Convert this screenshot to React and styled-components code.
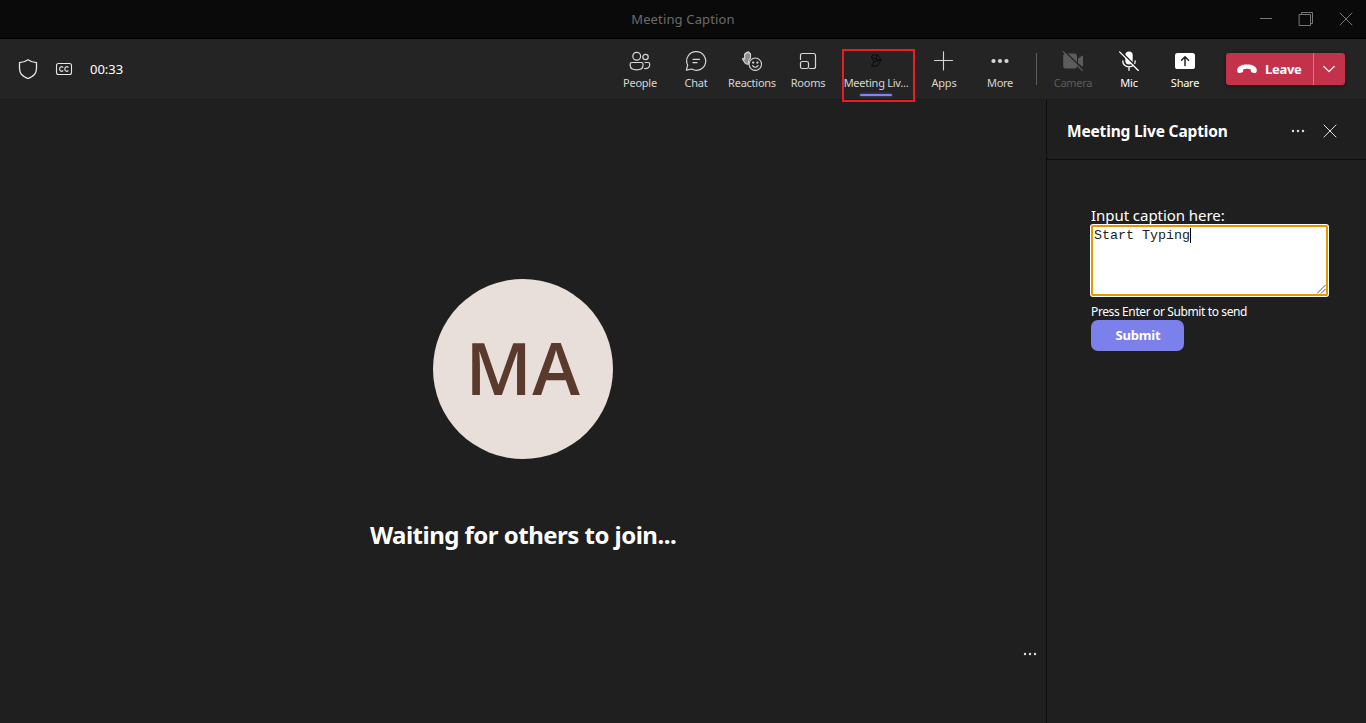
import React from 'react';
import styled, { createGlobalStyle } from 'styled-components';

const GlobalStyle = createGlobalStyle`
  * { box-sizing: border-box; }
  body {
    margin: 0;
    background: #1f1f1f;
    color: #fff;
    font-family: "Noto Sans", "Open Sans", sans-serif;
    overflow: hidden;
  }
  svg { display: block; flex: none; }
`;

const Window = styled.div`
  display: flex;
  flex-direction: column;
  width: 1366px;
  height: 723px;
`;

const TitleBar = styled.header`
  display: grid;
  grid-template-columns: 1fr auto 1fr;
  align-items: center;
  height: 39px;
  background: #0a0a0a;
  border-bottom: 1px solid #000;
`;

const WindowTitle = styled.span`
  grid-column: 2;
  color: #6b6b6b;
  font-size: 13px;
  line-height: 18px;
  letter-spacing: 0.15px;
`;

const WindowControls = styled.div`
  display: flex;
  justify-content: flex-end;
  gap: 24px;
  padding-right: 12px;
  color: #777;
`;

const Toolbar = styled.div`
  display: flex;
  align-items: center;
  height: 60px;
  padding: 0 21px 0 18px;
  background: #242424;
`;

const Status = styled.div`
  display: flex;
  align-items: center;
  flex: 1;
  gap: 16px;
  color: #e6e6e6;
`;

const Timer = styled.span`
  font-size: 13px;
  line-height: 18px;
  letter-spacing: 0;
  color: #fff;
`;

const Actions = styled.nav`
  display: flex;
  align-items: center;
`;

const Action = styled.div`
  position: relative;
  display: flex;
  flex-direction: column;
  align-items: center;
  width: ${(p) => p.$width || 56}px;
  height: 60px;
  padding-top: 12px;
  color: ${(p) => p.$color || '#d6d6d6'};
`;

const ActionLabel = styled.span`
  margin-top: 4px;
  font-size: 11px;
  line-height: 16px;
  letter-spacing: -0.25px;
  white-space: nowrap;
`;

const ActiveBar = styled.span`
  width: 32px;
  height: 2px;
  margin-top: 3px;
  border-radius: 1px;
  background: #7f85f5;
  box-shadow: 0 0 3px rgba(127, 133, 245, 0.55);
`;

const Highlight = styled.span`
  position: absolute;
  top: 10px;
  left: 6px;
  width: 73px;
  height: 53px;
  border: 2px solid #ec1c24;
  z-index: 1;
`;

const Divider = styled.span`
  width: 1px;
  height: 32px;
  margin: 0 8px;
  background: #5c5c5c;
`;

const LeaveGroup = styled.div`
  display: flex;
  width: 119px;
  height: 32px;
  margin-left: 13px;
  border-radius: 3px;
  background: #c4314b;
  box-shadow: 0 1px 4px rgba(0, 0, 0, 0.45);
`;

const LeaveMain = styled.div`
  display: flex;
  align-items: center;
  width: 88px;
  padding-left: 11px;
  gap: 8px;
  border-right: 1px solid #f1677f;
  font-size: 13px;
  font-weight: 700;
  letter-spacing: -0.3px;
`;

const LeaveMenu = styled.div`
  display: flex;
  flex: 1;
  align-items: center;
  justify-content: center;
  padding-right: 1px;
`;

const Content = styled.main`
  display: flex;
  flex: 1;
  border-top: 1px solid #1b1b1b;
`;

const Stage = styled.section`
  display: flex;
  flex-direction: column;
  align-items: center;
  width: 1046px;
  padding-top: 179px;
`;

const Avatar = styled.div`
  display: flex;
  align-items: center;
  justify-content: center;
  width: 180px;
  height: 180px;
  padding: 0 0 4px 0;
  border-radius: 50%;
  background: #e8deda;
  color: #593a2d;
  font-family: "Open Sans", sans-serif;
  font-size: 72px;
  font-weight: 650;
  line-height: 96px;
  letter-spacing: 0.5px;
`;

const Waiting = styled.h1`
  margin: 60px 0 0;
  font-size: 24px;
  line-height: 32px;
  font-weight: 700;
  letter-spacing: -0.52px;
`;

const StageFooter = styled.div`
  display: flex;
  align-self: stretch;
  justify-content: flex-end;
  padding: 95px 8px 0 0;
  color: #e0e0e0;
`;

const Panel = styled.aside`
  flex: 1;
  border-left: 1px solid #0d0d0d;
`;

const PanelHeader = styled.div`
  display: flex;
  align-items: center;
  height: 60px;
  padding: 3px 29px 0 20px;
  border-bottom: 1px solid #0d0d0d;
`;

const PanelTitle = styled.h2`
  flex: 1;
  margin: 0;
  font-size: 15.5px;
  line-height: 20px;
  font-weight: 700;
  letter-spacing: -0.17px;
`;

const PanelTools = styled.div`
  display: flex;
  align-items: center;
  gap: 17px;
  color: #e0e0e0;
`;

const CaptionForm = styled.div`
  display: flex;
  flex-direction: column;
  align-items: flex-start;
  padding: 45px 38px 0 44px;
`;

const FieldLabel = styled.label`
  font-size: 15px;
  line-height: 20px;
  letter-spacing: -0.05px;
`;

const CaptionInput = styled.div`
  position: relative;
  width: 237px;
  height: 71px;
  padding: 1px 1px;
  border: 2px solid #e59700;
  border-radius: 2px;
  box-shadow: 0 0 0 1px #fff;
  background: #fff;
  color: #222;
  font-family: "Liberation Mono", monospace;
  font-size: 13.333px;
  line-height: 15px;
`;

const Caret = styled.span`
  display: inline-block;
  width: 1px;
  height: 15px;
  background: #000;
  vertical-align: top;
`;

const Grip = styled.svg`
  position: absolute;
  right: 0;
  bottom: 0;
`;

const Hint = styled.span`
  margin-top: 8px;
  font-size: 12px;
  line-height: 16px;
  letter-spacing: -0.38px;
`;

const Submit = styled.button`
  width: 93px;
  height: 31px;
  margin: 0;
  padding: 0 0 1px 1px;
  border: 0;
  border-radius: 7px;
  background: #7b80eb;
  color: #fff;
  font: 700 13px "Noto Sans", "Open Sans", sans-serif;
  letter-spacing: -0.2px;
`;

const Icon = ({ size = 20, h, sw = 1.2, children, ...rest }) => (
  <svg width={size} height={h || size} viewBox={`0 0 ${size} ${h || size}`} fill="none"
    stroke="currentColor" strokeWidth={sw} strokeLinecap="round" strokeLinejoin="round" {...rest}>
    {children}
  </svg>
);

const Dots = ({ size = 16, r = 1.2, step = 5 }) => (
  <Icon size={size}>
    <g fill="currentColor" stroke="none">
      {[-step, 0, step].map((d) => <circle key={d} cx={size / 2 + d} cy={size / 2} r={r} />)}
    </g>
  </Icon>
);

const ShieldIcon = () => (
  <Icon sw={1.3}><path d="M10 .8C12.6 2.7 15.4 3.5 18.5 3.6V9.6C18.5 14.5 15.4 17.8 10 19.6C4.6 17.8 1.5 14.5 1.5 9.6V3.6C4.6 3.5 7.4 2.7 10 .8Z" /></Icon>
);

const CcIcon = () => (
  <Icon sw={1.1}>
    <rect x="2.5" y="4.5" width="15" height="11" rx="2" />
    <path d="M8.9 8.2C7.4 7 5.6 8 5.6 10S7.4 13 8.9 11.8M14.1 8.2C12.6 7 10.8 8 10.8 10S12.6 13 14.1 11.8" />
  </Icon>
);

const PeopleIcon = () => (
  <Icon size={22} h={20}>
    <circle cx="7.7" cy="5.2" r="3.9" /><circle cx="16.5" cy="6" r="2.7" />
    <path d="M2.8 11.5H12.5Q14 11.5 14 13V14.2C14 17 11.5 18.8 7.7 18.8S1.2 17 1.2 14.2V13Q1.2 11.5 2.8 11.5Z" />
    <path d="M16 11.5H19.2Q20.7 11.5 20.7 13V13.8C20.7 16.4 18.8 17.8 15.5 17.5" />
  </Icon>
);

const ChatIcon = () => (
  <Icon size={22} h={20}>
    <path d="M11.3 .7A9.3 9.3 0 1 1 6.7 18L1.3 19.2L2.7 14.2A9.3 9.3 0 0 1 11.3 .7Z" />
    <path d="M8 8.3H14.5M8 11.7H12" />
  </Icon>
);

const ReactionsIcon = () => (
  <Icon size={22} h={20} sw={1.1}>
    <path d="M4.2 12.2L1.7 8.4Q1.3 7.4 2.2 7.2L3.6 8.1V3.2Q4.1 2.2 5 3V1.8Q5.7 .7 6.5 1.7V1.2Q7.3 .2 8.1 1.3V2.5Q9.2 1.7 9.5 3V7.1C7.7 8.6 7.1 10.8 7.5 13.2Q5.5 13.5 4.2 12.2Z" fill="#8c8c8c" />
    <circle cx="14.3" cy="13.2" r="6.2" />
    <circle cx="12.2" cy="11.6" r=".6" fill="currentColor" /><circle cx="16.4" cy="11.6" r=".6" fill="currentColor" />
    <path d="M11.5 14.6Q14.3 17.9 17.1 14.6" />
  </Icon>
);

const RoomsIcon = () => (
  <Icon>
    <path d="M2.5 8.5V4.5Q2.5 2.5 4.5 2.5H15.5Q17.5 2.5 17.5 4.5V15.5Q17.5 17.5 15.5 17.5H11.5" />
    <rect x="2.5" y="10.5" width="8" height="7" rx="1.8" />
  </Icon>
);

const CaptionAppIcon = () => (
  <Icon sw={1} stroke="#0c0c0c">
    <path d="M5.5 5.8L7 3.8H11.5L15.2 9.2L11.5 14.8L5.5 15L7.8 10.8ZM5.5 5.8L9.8 8.2L11.5 3.8M9.8 8.2L15.2 9.2L7.8 10.8" />
  </Icon>
);

const PlusIcon = () => (
  <Icon sw={1.1}><path d="M9.5 .8V19M.5 9.5H18.5" /></Icon>
);

const CameraOffIcon = () => (
  <Icon size={22} h={20}>
    <g fill="currentColor" stroke="none">
      <rect x="1.2" y="2.5" width="13.8" height="15" rx="2.8" />
      <path d="M16 7.8L20 4.7Q21 4.3 21 5.3V14.7Q21 15.7 20 15.3L16 12.2Z" />
    </g>
    <path d="M2.5 .2L22 19.2" stroke="#242424" strokeWidth="1.5" />
    <path d="M1.3 .8L20.7 19.8" />
  </Icon>
);

const MicOffIcon = () => (
  <Icon sw={1.3}>
    <rect x="6.3" y=".5" width="7.4" height="13" rx="3.7" fill="currentColor" stroke="none" />
    <path d="M3.8 10C3.8 13.7 6.5 15.8 10 15.8S16.2 13.7 16.2 10M10 15.8V19.3" />
    <path d="M1.6 .1L20 18.2" stroke="#242424" strokeWidth="1.5" />
    <path d="M.6 .9L19.3 19.5" />
  </Icon>
);

const ShareIcon = () => (
  <Icon>
    <rect x="0" y="2" width="20" height="16" rx="2.6" fill="currentColor" stroke="none" />
    <path d="M10 14.5V6M6.5 9.2L10 5.7L13.5 9.2" stroke="#242424" strokeWidth="1.5" />
  </Icon>
);

const PhoneIcon = () => (
  <Icon size={20} h={12}>
    <path d="M10 1.6C15.3 1.6 19.8 3.5 19.8 7.3C19.8 9.6 18.8 10.2 17.4 9.9L15.1 9.4Q13.9 9.1 13.8 7.9L13.7 6.3Q10 5.1 6.3 6.3L6.2 7.9Q6.1 9.1 4.9 9.4L2.6 9.9C1.2 10.2 .2 9.6 .2 7.3C.2 3.5 4.7 1.6 10 1.6Z" fill="currentColor" stroke="none" />
  </Icon>
);

const ACTIONS = [
  { label: 'People', icon: <PeopleIcon /> },
  { label: 'Chat', icon: <ChatIcon /> },
  { label: 'Reactions', icon: <ReactionsIcon /> },
  { label: 'Rooms', icon: <RoomsIcon /> },
  { label: 'Meeting Liv...', icon: <CaptionAppIcon />, width: 80, active: true },
  { label: 'Apps', icon: <PlusIcon /> },
  { label: 'More', icon: <Dots size={20} r={2.1} step={6.5} /> },
];

const DEVICES = [
  { label: 'Camera', icon: <CameraOffIcon />, color: '#5c5c5c' },
  { label: 'Mic', icon: <MicOffIcon />, color: '#fff' },
  { label: 'Share', icon: <ShareIcon />, color: '#fff' },
];

const renderAction = (a) => (
  <Action key={a.label} $width={a.width} $color={a.color}>
    {a.icon}
    <ActionLabel>{a.label}</ActionLabel>
    {a.active && <ActiveBar />}
    {a.active && <Highlight />}
  </Action>
);

export default function App() {
  return (
    <>
      <GlobalStyle />
      <Window>
        <TitleBar>
          <WindowTitle>Meeting Caption</WindowTitle>
          <WindowControls>
            <Icon size={16} sw={1} strokeLinecap="butt"><path d="M2 7.5H14" /></Icon>
            <Icon size={16} sw={1} strokeLinejoin="miter"><path d="M1.5 3.5H12.5V14.5H1.5ZM3.5 3.5V1.5H14.5V12.5H12.5" /></Icon>
            <Icon size={16} sw={1}><path d="M2 2L14 14M14 2L2 14" /></Icon>
          </WindowControls>
        </TitleBar>
        <Toolbar>
          <Status>
            <ShieldIcon />
            <CcIcon />
            <Timer>00:33</Timer>
          </Status>
          <Actions>
            {ACTIONS.map(renderAction)}
            <Divider />
            {DEVICES.map(renderAction)}
          </Actions>
          <LeaveGroup>
            <LeaveMain><PhoneIcon />Leave</LeaveMain>
            <LeaveMenu><Icon size={12} sw={1.2}><path d="M.8 3.5L6 8.7L11.2 3.5" /></Icon></LeaveMenu>
          </LeaveGroup>
        </Toolbar>
        <Content>
          <Stage>
            <Avatar>MA</Avatar>
            <Waiting>Waiting for others to join...</Waiting>
            <StageFooter><Dots /></StageFooter>
          </Stage>
          <Panel>
            <PanelHeader>
              <PanelTitle>Meeting Live Caption</PanelTitle>
              <PanelTools>
                <Dots />
                <Icon size={14} sw={1}><path d="M1 1L13 13M13 1L1 13" /></Icon>
              </PanelTools>
            </PanelHeader>
            <CaptionForm>
              <FieldLabel>Input caption here:</FieldLabel>
              <CaptionInput>
                Start Typing<Caret />
                <Grip width="9" height="9" viewBox="0 0 9 9" stroke="#555" strokeWidth="1"><path d="M0 8.5L8.5 0M4 8.5L8.5 4" /></Grip>
              </CaptionInput>
              <Hint>Press Enter or Submit to send</Hint>
              <Submit>Submit</Submit>
            </CaptionForm>
          </Panel>
        </Content>
      </Window>
    </>
  );
}
